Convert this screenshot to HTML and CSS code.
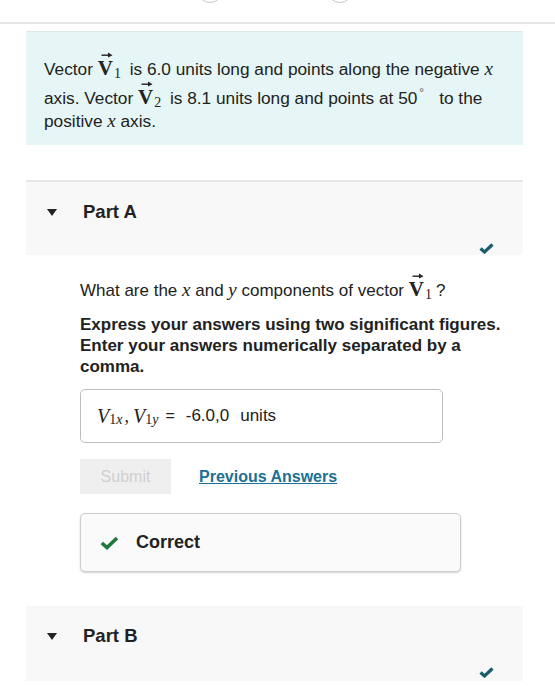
FILE: index.html
```html
<!DOCTYPE html>
<html>
<head>
<meta charset="utf-8">
<link rel="stylesheet" href="styles.css">
</head>
<body>
<div class="topbar">
  <span class="circ"></span>
  <span class="circ"></span>
</div>

<div class="intro">
  <div class="ln">Vector <span class="vec">V<svg class="arrow" viewBox="0 0 12 6"><path d="M0.5 3.2 H9" stroke="#222" stroke-width="1.4"/><path d="M7 0.6 L11.5 3.2 L7 5.6 Z" fill="#222"/></svg></span><span class="sub">1</span> is 6.0 units long and points along the negative <i class="m">x</i></div>
  <div class="ln l2">axis. Vector <span class="vec">V<svg class="arrow" viewBox="0 0 12 6"><path d="M0.5 3.2 H9" stroke="#222" stroke-width="1.4"/><path d="M7 0.6 L11.5 3.2 L7 5.6 Z" fill="#222"/></svg></span><span class="sub">2</span> is 8.1 units long and points at 50<span class="deg">°</span>to the</div>
  <div class="ln l3">positive <i class="m">x</i> axis.</div>
</div>

<section class="part">
  <div class="part-head"><span class="tri"></span><span class="part-title">Part A</span></div>
  <div class="part-status"><svg class="chk" viewBox="0 0 15 11"><path d="M1.5 5.5 L5.5 9 L13.5 1.5" fill="none" stroke="#1b5d6d" stroke-width="3.2"/></svg></div>
</section>

<div class="part-body">
  <p class="q">What are the <i class="m">x</i> and <i class="m">y</i> components of vector <span class="vec">V<svg class="arrow" viewBox="0 0 12 6"><path d="M0.5 3.2 H9" stroke="#222" stroke-width="1.4"/><path d="M7 0.6 L11.5 3.2 L7 5.6 Z" fill="#222"/></svg></span><span class="sub">1</span>?</p>
  <p class="instr">Express your answers using two significant figures.<br>Enter your answers numerically separated by a<br>comma.</p>
  <div class="answer">
    <span class="mv">V</span><span class="msub">1<i>x</i></span><span class="comma">,</span><span class="mv">V</span><span class="msub">1<i>y</i></span><span class="eq">=</span><span class="val">-6.0,0</span><span class="unit">units</span>
  </div>
  <div class="actions">
    <span class="submit">Submit</span>
    <a class="prev">Previous Answers</a>
  </div>
  <div class="correct">
    <svg class="gchk" viewBox="0 0 19 14"><path d="M1.8 7 L7 11.5 L17 2" fill="none" stroke="#1e7a3c" stroke-width="3.6"/></svg>
    <span>Correct</span>
  </div>
</div>

<section class="part partb">
  <div class="part-head"><span class="tri"></span><span class="part-title">Part B</span></div>
  <div class="part-status"><svg class="chk" viewBox="0 0 15 11"><path d="M1.5 5.5 L5.5 9 L13.5 1.5" fill="none" stroke="#1b5d6d" stroke-width="3.2"/></svg></div>
</section>
</body>
</html>
```
FILE: styles.css
```css
html, body {
  margin: 0;
  padding: 0;
  background: #fff;
}
body {
  font-family: "Liberation Sans", Arial, sans-serif;
  color: #222;
  font-size: 17px;
  width: 555px;
  height: 700px;
  overflow: hidden;
}
.topbar {
  height: 22px;
  border-bottom: 2px solid #e6e6e6;
  overflow: hidden;
  display: flex;
  padding-left: 197px;
  gap: 104px;
}
.circ {
  width: 24px;
  height: 24px;
  border: 1.5px solid #c8c8c8;
  border-radius: 50%;
  margin-top: -23px;
  flex: none;
}
.intro {
  margin: 7px 32px 0 26px;
  background: #e6f6f6;
  border-top: 1px solid #dfe8e8;
  height: 114px;
  padding: 26px 18px 0;
  box-sizing: border-box;
  font-size: 17.25px;
}
.ln {
  line-height: 22px;
  height: 22px;
  white-space: nowrap;
}
.l2 { margin-top: 7px; }
.l3 { margin-top: 1px; }
.vec {
  position: relative;
  display: inline-block;
  font-family: "Liberation Serif", "Times New Roman", serif;
  font-weight: bold;
  font-size: 21px;
  line-height: 16px;
}
.arrow {
  position: absolute;
  left: 3px;
  top: -8px;
  width: 12px;
  height: 6px;
}
.sub {
  font-family: "Liberation Serif", serif;
  font-size: 14px;
  line-height: 0;
  position: relative;
  top: 3px;
  margin-left: 1px;
  margin-right: 4px;
}
.m {
  font-family: "Liberation Serif", serif;
  font-size: 19px;
  line-height: 0;
}
.deg {
  font-size: 12px;
  line-height: 0;
  position: relative;
  top: -7px;
  margin: 0 15px 0 2px;
  color: #555;
}
.part {
  margin: 35px 32px 0 26px;
  background: #f8f8f8;
  border-top: 2px solid #e6e6e6;
  height: 73px;
}
.part-head {
  display: flex;
  align-items: center;
  padding: 19px 0 0 21px;
  height: 22px;
}
.tri {
  width: 0;
  height: 0;
  border-left: 5px solid transparent;
  border-right: 5px solid transparent;
  border-top: 7px solid #222;
  margin-right: 26px;
}
.part-title {
  font-weight: bold;
  font-size: 18.5px;
}
.part-status {
  display: flex;
  justify-content: flex-end;
  padding: 20px 29px 0 0;
}
.chk {
  width: 15px;
  height: 11px;
}
.part-body {
  padding: 25px 0 0 80px;
}
.q {
  margin: 0;
  line-height: 22px;
}
.instr {
  margin: 12px 0 0;
  font-weight: bold;
  line-height: 21px;
}
.answer {
  margin-top: 12px;
  width: 345px;
  height: 52px;
  border: 1px solid #bdbdbd;
  border-radius: 5px;
  display: flex;
  align-items: center;
  padding-left: 16px;
  box-sizing: content-box;
}
.mv {
  font-family: "Liberation Serif", serif;
  font-style: italic;
  font-size: 20px;
}
.msub {
  font-family: "Liberation Serif", serif;
  font-size: 14px;
  position: relative;
  top: 4px;
}
.msub i { font-size: 14px; }
.comma {
  font-family: "Liberation Serif", serif;
  font-size: 18px;
  margin: 0 4px 0 2px;
}
.eq {
  margin: 0 11px 0 7px;
  font-size: 16px;
}
.val, .unit {
  font-size: 17px;
}
.unit {
  margin-left: 11px;
}
.actions {
  margin-top: 16px;
  display: flex;
  align-items: center;
}
.submit {
  width: 91px;
  height: 35px;
  background: #efefef;
  color: #cfcfcf;
  display: flex;
  align-items: center;
  justify-content: center;
  font-size: 16px;
}
.prev {
  margin-left: 28px;
  color: #1b7093;
  font-weight: bold;
  font-size: 16px;
  text-decoration: underline;
}
.correct {
  margin-top: 19px;
  width: 381px;
  height: 59px;
  box-sizing: border-box;
  border: 1px solid #cdcdcd;
  border-radius: 5px;
  background: #fafafa;
  box-shadow: 0 1px 2px rgba(0,0,0,0.18);
  display: flex;
  align-items: center;
  padding-left: 19px;
  font-weight: bold;
  font-size: 18px;
}
.gchk {
  width: 19px;
  height: 14px;
  margin-right: 17px;
}
.partb {
  margin-top: 34px;
  border-top: none;
  height: 75px;
}
.partb .part-head { padding-top: 19px; }
```
